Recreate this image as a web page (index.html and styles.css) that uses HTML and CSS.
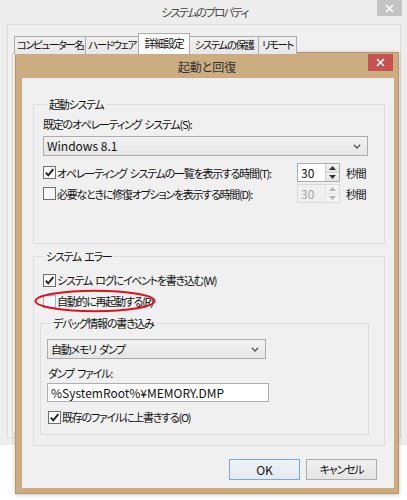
FILE: index.html
```html
<!DOCTYPE html>
<html lang="ja">
<head>
<meta charset="utf-8">
<title>起動と回復</title>
<link rel="stylesheet" href="styles.css">
</head>
<body>
<div class="outer">
  <div class="otitle">
    <span class="otext">システムのプロパティ</span>
    <div class="oclose"><svg width="9" height="9" viewBox="0 0 9 9"><path d="M1 1 L8 8 M8 1 L1 8" stroke="#fff" stroke-width="1.6"/></svg></div>
  </div>
  <div class="oclient">
    <div class="tabs">
      <div class="tab t1">コンピューター名</div>
      <div class="tab t2">ハードウェア</div>
      <div class="tab t3 sel">詳細設定</div>
      <div class="tab t4">システムの保護</div>
      <div class="tab t5">リモート</div>
    </div>
    <div class="pane"></div>
  </div>
</div>

<div class="dialog">
  <div class="dtitle">
    <span class="dtext">起動と回復</span>
    <div class="dclose"><svg width="9" height="9" viewBox="0 0 9 9"><path d="M1 1 L8 8 M8 1 L1 8" stroke="#fff" stroke-width="1.6"/></svg></div>
  </div>
  <div class="dclient">
    <fieldset class="group g1">
      <legend>起動システム</legend>
      <div class="lbl l1">既定のオペレーティング システム(S):</div>
      <div class="combo c1"><span class="lat">Windows 8.1</span><svg class="chev" width="8" height="5" viewBox="0 0 8 5"><path d="M0.8 0.8 L4 4 L7.2 0.8" fill="none" stroke="#555" stroke-width="1.3"/></svg></div>
      <div class="spinrow s1">
        <div class="cb checked"><svg width="11" height="11" viewBox="0 0 11 11"><path d="M1.8 5.6 L4.3 8.3 L9.3 2.2" fill="none" stroke="#1e1e1e" stroke-width="1.9"/></svg></div>
        <span class="cbl">オペレーティング システムの一覧を表示する時間(T):</span>
        <div class="spin">
          <div class="sval">30</div>
          <div class="sbtns">
            <div class="sb"><svg width="7" height="4" viewBox="0 0 7 4"><path d="M0 4 L3.5 0 L7 4 Z" fill="#333"/></svg></div>
            <div class="sb"><svg width="7" height="4" viewBox="0 0 7 4"><path d="M0 0 L3.5 4 L7 0 Z" fill="#333"/></svg></div>
          </div>
        </div>
        <span class="unit">秒間</span>
      </div>
      <div class="spinrow s2 dis">
        <div class="cb"></div>
        <span class="cbl">必要なときに修復オプションを表示する時間(D):</span>
        <div class="spin">
          <div class="sval">30</div>
          <div class="sbtns">
            <div class="sb"><svg width="7" height="4" viewBox="0 0 7 4"><path d="M0 4 L3.5 0 L7 4 Z" fill="#b5b5b5"/></svg></div>
            <div class="sb"><svg width="7" height="4" viewBox="0 0 7 4"><path d="M0 0 L3.5 4 L7 0 Z" fill="#b5b5b5"/></svg></div>
          </div>
        </div>
        <span class="unit">秒間</span>
      </div>
    </fieldset>

    <fieldset class="group g2">
      <legend>システム エラー</legend>
      <div class="cbrow r1">
        <div class="cb checked"><svg width="11" height="11" viewBox="0 0 11 11"><path d="M1.8 5.6 L4.3 8.3 L9.3 2.2" fill="none" stroke="#1e1e1e" stroke-width="1.9"/></svg></div>
        <span class="cbl">システム ログにイベントを書き込む(W)</span>
      </div>
      <div class="cbrow r2">
        <div class="cb hot"></div>
        <span class="cbl">自動的に再起動する(R)</span>
        <svg class="mark" width="122" height="24" viewBox="0 0 122 24"><ellipse cx="61" cy="12" rx="59.5" ry="10.2" fill="none" stroke="#e3101c" stroke-width="2"/></svg>
      </div>
      <fieldset class="group sub">
        <legend>デバッグ情報の書き込み</legend>
        <div class="combo c2"><span>自動メモリ ダンプ</span><svg class="chev" width="8" height="5" viewBox="0 0 8 5"><path d="M0.8 0.8 L4 4 L7.2 0.8" fill="none" stroke="#555" stroke-width="1.3"/></svg></div>
        <div class="lbl l2">ダンプ ファイル:</div>
        <div class="input">%SystemRoot%¥MEMORY.DMP</div>
        <div class="cbrow r3">
          <div class="cb checked"><svg width="11" height="11" viewBox="0 0 11 11"><path d="M1.8 5.6 L4.3 8.3 L9.3 2.2" fill="none" stroke="#1e1e1e" stroke-width="1.9"/></svg></div>
          <span class="cbl">既存のファイルに上書きする(O)</span>
        </div>
      </fieldset>
    </fieldset>

    <div class="buttons">
      <div class="btn def lat">OK</div>
      <div class="btn">キャンセル</div>
    </div>
  </div>
</div>
</body>
</html>
```
FILE: styles.css
```css
* { box-sizing: border-box; }
html, body { margin: 0; padding: 0; }
body {
  width: 407px;
  height: 500px;
  overflow: hidden;
  position: relative;
  background: #ffffff;
  font-family: "Noto Sans CJK JP", sans-serif;
  font-size: 11px;
  letter-spacing: -1.25px;
  word-spacing: 2px;
  font-feature-settings: "palt";
  color: #111111;
}
.lat {
  font-size: 12px;
  letter-spacing: 0;
  word-spacing: 0;
}

/* outer window */
.outer {
  width: 407px;
  height: 445px;
  background: #ededed;
  display: flex;
  flex-direction: column;
}
.otitle {
  height: 24px;
  position: relative;
  display: flex;
  justify-content: center;
  align-items: center;
}
.otext {
  font-size: 11.5px;
  letter-spacing: -1.8px;
  color: #4a4a4a;
  line-height: 16px;
  margin-top: -1px;
  padding-left: 2px;
}
.oclose {
  position: absolute;
  left: 377px;
  top: 0;
  width: 25px;
  height: 16px;
  background: #c4c4c4;
  display: flex;
  align-items: center;
  justify-content: center;
}
.oclient {
  margin: 0 6px 0 7px;
  height: 414px;
  background: #f0f0f0;
  border: 1px solid #dcdcdc;
  display: flex;
  flex-direction: column;
}
.tabs {
  display: flex;
  padding: 8px 0 0 6px;
  margin-bottom: -1px;
  position: relative;
  z-index: 1;
  align-items: flex-end;
}
.tab {
  height: 18px;
  border: 1px solid #acacac;
  border-bottom: none;
  background: linear-gradient(#f0f0f0, #e8e8e8);
  line-height: 16px;
  text-align: center;
  margin-right: -1px;
  white-space: nowrap;
  overflow: hidden;
  font-size: 10.5px;
  letter-spacing: -1.5px;
  color: #111111;
}
.t1 { width: 72px; }
.t2 { width: 54px; }
.t3 { width: 52px; font-size: 11px; letter-spacing: -1.2px; }
.t4 { width: 70px; }
.t5 { width: 39px; }
.tab.sel {
  height: 21px;
  background: #ffffff;
  position: relative;
  z-index: 2;
  line-height: 18px;
}
.pane {
  margin-left: 4px;
  width: 383px;
  flex: 1;
  background: #ffffff;
  border: 1px solid #d9d9d9;
  margin-bottom: 3px;
}

/* dialog */
.dialog {
  position: absolute;
  left: 15px;
  top: 52px;
  width: 384px;
  height: 442px;
  background: #ccad81;
  border: 1px solid #b3966b;
  box-shadow: 0 1px 4px rgba(0,0,0,0.22);
  display: flex;
  flex-direction: column;
}
.dtitle {
  height: 25px;
  position: relative;
  display: flex;
  justify-content: center;
  align-items: center;
}
.dtext {
  font-size: 12px;
  letter-spacing: 0;
  color: #333333;
  line-height: 16px;
  margin-top: 2px;
}
.dclose {
  position: absolute;
  left: 352px;
  top: 1px;
  width: 25px;
  height: 17px;
  background: #c75050;
  display: flex;
  align-items: center;
  justify-content: center;
}
.dclient {
  margin: 0 4px 0 6px;
  height: 410px;
  background: #f0f0f0;
  padding: 19px 9px 0 11px;
  display: flex;
  flex-direction: column;
}

/* group boxes */
.group {
  margin: 0;
  padding: 0;
  min-width: 0;
  border: 1px solid #dcdcdc;
  border-radius: 0;
}
.group legend {
  padding: 0 2px;
  margin-left: 4px;
  line-height: 14px;
  height: 14px;
  color: #111111;
}
.g1 { padding: 0 16px 40px 9px; }
.g2 { margin-top: 5px; padding: 0 15px 10px 6px; }
.sub { margin-top: 7px; padding: 0 0 9px 6px; }
.sub legend { margin-left: 4px; }

.lbl { line-height: 14px; height: 14px; white-space: nowrap; }
.l1 { margin-top: 6px; }
.l2 { margin-top: 7px; margin-left: 1px; }

.combo {
  height: 20px;
  border: 1px solid #acacac;
  background: linear-gradient(#f2f2f2, #e6e6e6);
  display: flex;
  align-items: center;
  justify-content: space-between;
  padding: 0 6px 0 3px;
  line-height: 16px;
}
.c1 { margin-top: 5px; }
.c2 { margin-top: 9px; width: 219px; }
.chev { display: block; }

.spinrow {
  display: flex;
  align-items: center;
  height: 19px;
}
.s1 { margin-top: 7px; }
.s2 { margin-top: 2px; }
.spinrow .cbl { flex: 1; }
.spin {
  width: 43px;
  height: 19px;
  display: flex;
  border: 1px solid #abadb3;
  background: #ffffff;
}
.sval {
  flex: 1;
  padding-left: 3px;
  line-height: 17px;
  font-size: 12px;
  letter-spacing: 0;
}
.sbtns {
  width: 14px;
  display: flex;
  flex-direction: column;
  border-left: 1px solid #d2d2d2;
}
.sb {
  flex: 1;
  display: flex;
  align-items: center;
  justify-content: center;
  background: linear-gradient(#f4f4f4, #e4e4e4);
}
.sb + .sb { border-top: 1px solid #d2d2d2; }
.unit {
  width: 28px;
  padding-left: 6px;
  line-height: 14px;
  white-space: nowrap;
}
.dis .spin { border-color: #d9d9d9; background: #f0f0f0; }
.dis .sval { color: #a3a3a3; }
.dis .sbtns { border-left-color: #e3e3e3; }
.dis .sb { background: #f4f4f4; }
.dis .sb + .sb { border-top-color: #e3e3e3; }

.cb {
  width: 13px;
  height: 13px;
  border: 1px solid #707070;
  background: linear-gradient(#f6f6f6, #ffffff);
  margin-right: 1px;
  flex: none;
  display: flex;
  align-items: center;
  justify-content: center;
}
.cb.hot {
  border-color: #8fb6dc;
  background: #f3f8fd;
}
.cbl { line-height: 14px; white-space: nowrap; }

.cbrow {
  display: flex;
  align-items: center;
  height: 16px;
  margin-left: 3px;
}
.r1 { margin-top: 9px; }
.r2 { margin-top: 5px; position: relative; }
.r3 { margin-top: 7px; margin-left: 1px; }
.mark {
  position: absolute;
  left: -9px;
  top: -4px;
}

.input {
  margin-top: 3px;
  width: 222px;
  height: 19px;
  border: 1px solid #abadb3;
  background: #ffffff;
  padding-left: 3px;
  line-height: 17px;
  font-size: 12px;
  letter-spacing: 0;
  word-spacing: 0;
}

.buttons {
  margin-top: 13px;
  display: flex;
  justify-content: flex-end;
  gap: 6px;
  padding-right: 8px;
}
.btn {
  width: 71px;
  height: 21px;
  border: 1px solid #acacac;
  background: linear-gradient(#f0f0f0, #e5e5e5);
  text-align: center;
  line-height: 19px;
}
.btn.def {
  border-color: #73a9dd;
  background: linear-gradient(#eef3f8, #e3e9ef);
}
```
